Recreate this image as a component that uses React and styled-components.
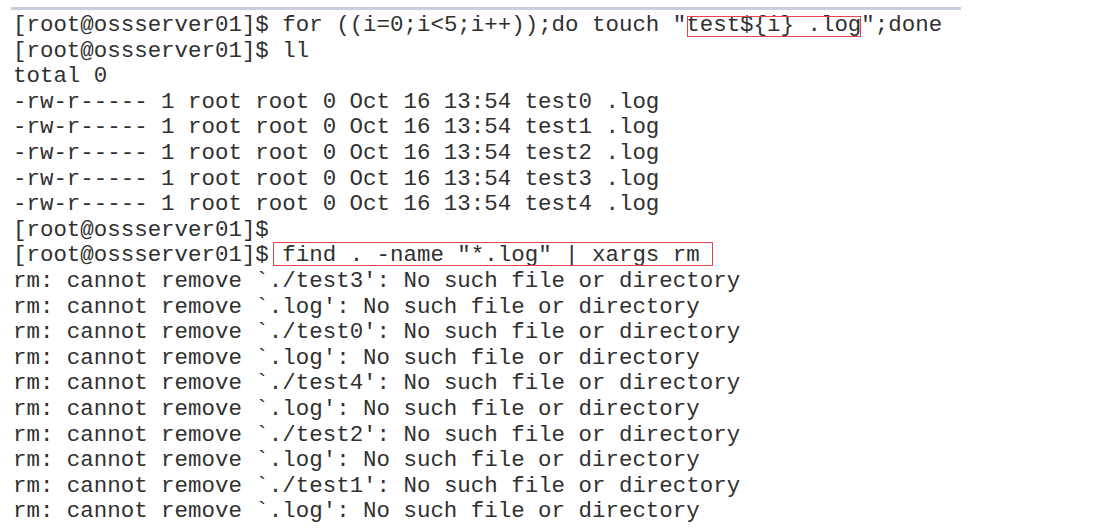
import styled, { createGlobalStyle } from "styled-components";

const GlobalStyle = createGlobalStyle`
  html, body {
    margin: 0;
    padding: 0;
    background: #ffffff;
  }
`;

const StyledPage = styled.main`
  width: 1098px;
  height: 531px;
  overflow: hidden;
  background: #ffffff;
`;

const StyledTopRule = styled.div`
  width: 950px;
  height: 3px;
  margin: 7px 0 0 11px;
  background-color: #c9cfdf;
`;

const StyledTerminal = styled.pre`
  margin: 0;
  padding: 3px 0 0 13px;
  font-family: "Liberation Mono", "Courier New", monospace;
  font-size: 22.45px;
  line-height: 25.6px;
  color: #303030;
  white-space: pre;
`;

const StyledLine = styled.div`
  height: 25.6px;
`;

const StyledMark = styled.span`
  position: relative;

  &::after {
    content: "";
    position: absolute;
    left: ${(props) => props.$left}px;
    right: ${(props) => props.$right}px;
    top: ${(props) => props.$top}px;
    bottom: ${(props) => props.$bottom}px;
    border: 1.5px solid #e5444c;
    pointer-events: none;
  }
`;

const PROMPT = "[root@ossserver01]$";

const files = [0, 1, 2, 3, 4];
const removeOrder = [3, 0, 4, 2, 1];

const App = () => {
  return (
    <StyledPage>
      <GlobalStyle />
      <StyledTopRule />
      <StyledTerminal>
        <StyledLine>
          {PROMPT} for ((i=0;i&lt;5;i++));do touch "
          <StyledMark $left={1} $right={0} $top={4} $bottom={1}>
            test${"{"}i{"}"} .log
          </StyledMark>
          ";done
        </StyledLine>
        <StyledLine>{PROMPT} ll</StyledLine>
        <StyledLine>total 0</StyledLine>
        {files.map((n) => (
          <StyledLine key={n}>
            -rw-r----- 1 root root 0 Oct 16 13:54 test{n} .log
          </StyledLine>
        ))}
        <StyledLine>{PROMPT}</StyledLine>
        <StyledLine>
          {PROMPT}
          <StyledMark $left={4} $right={0} $top={0} $bottom={2}>
            {' find . -name "*.log" | xargs rm '}
          </StyledMark>
        </StyledLine>
        {removeOrder.map((n) => [
          <StyledLine key={`t${n}`}>
            rm: cannot remove `./test{n}': No such file or directory
          </StyledLine>,
          <StyledLine key={`l${n}`}>
            rm: cannot remove `.log': No such file or directory
          </StyledLine>,
        ])}
      </StyledTerminal>
    </StyledPage>
  );
};

export default App;
